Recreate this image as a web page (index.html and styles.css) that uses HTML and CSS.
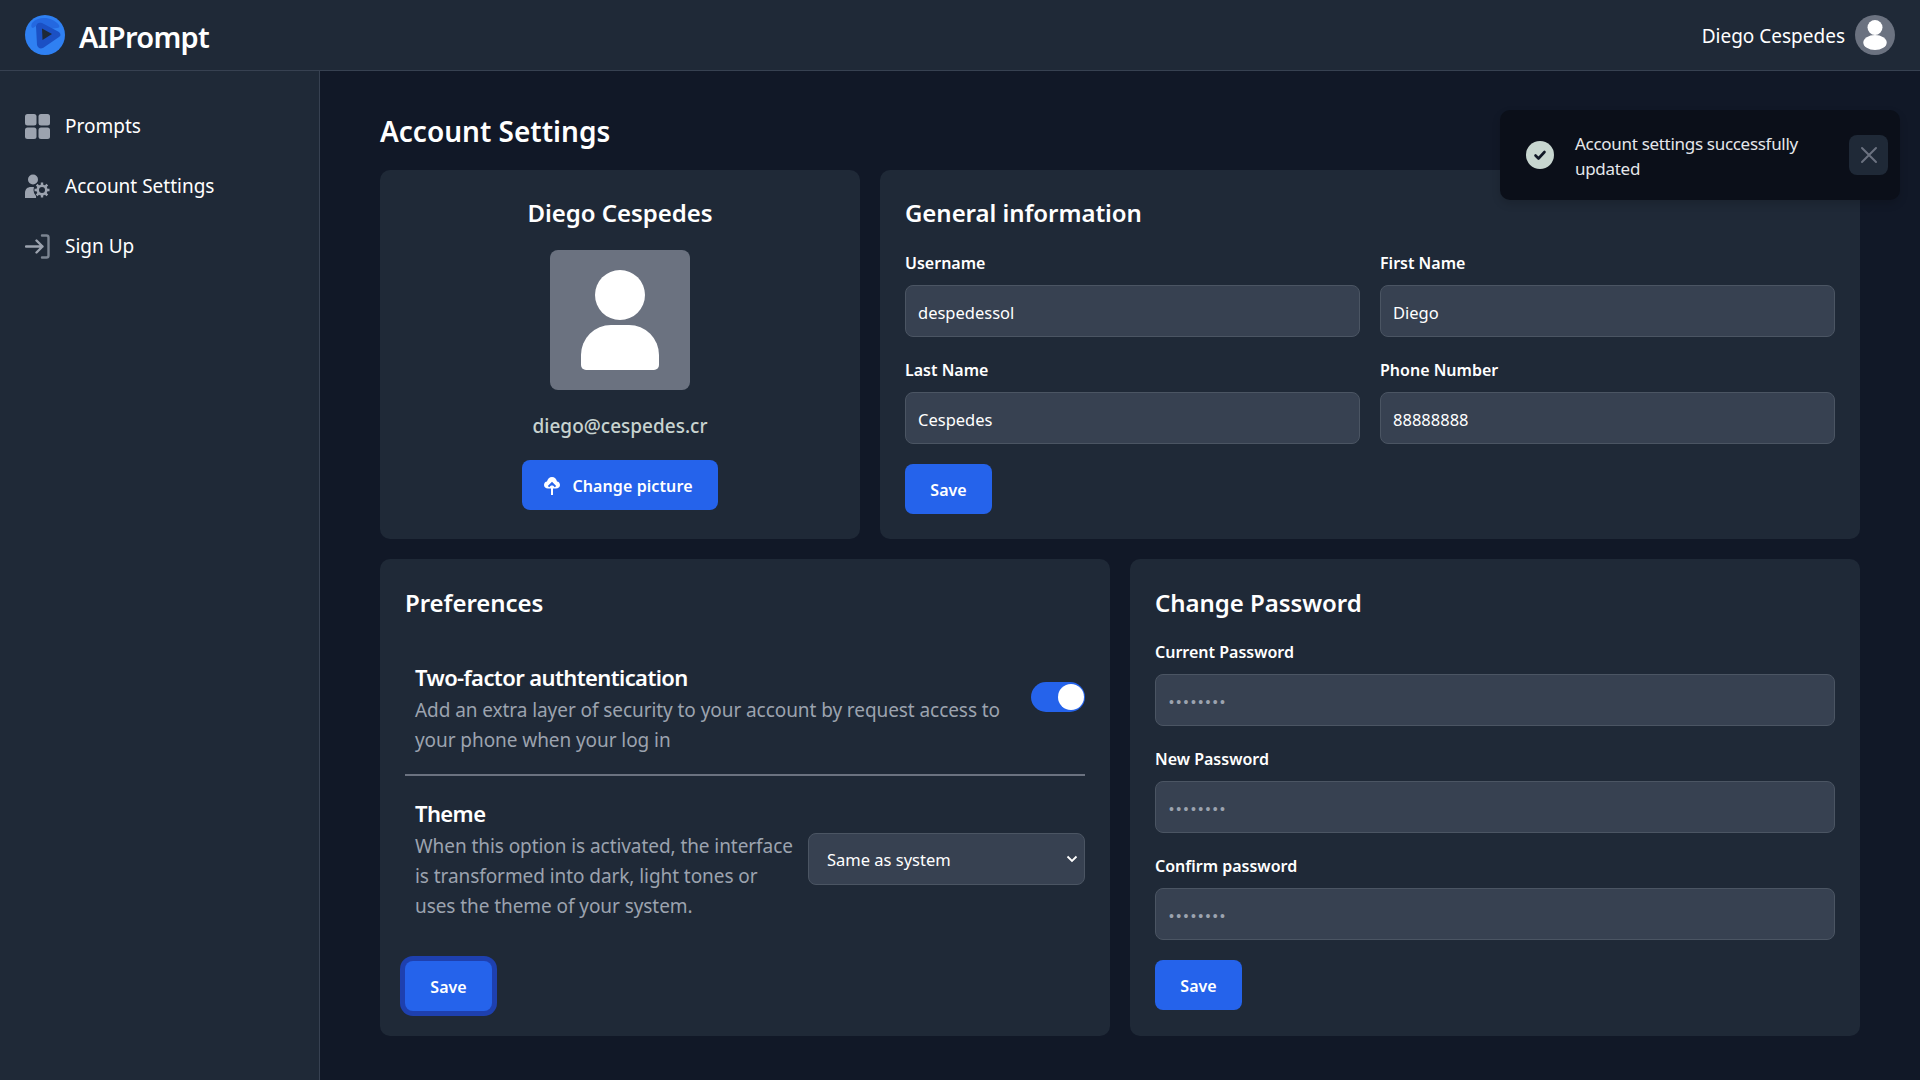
FILE: index.html
```html
<!DOCTYPE html>
<html lang="en">
<head>
<meta charset="utf-8">
<title>AIPrompt - Account Settings</title>
<link rel="stylesheet" href="styles.css">
</head>
<body>
<header class="topbar">
  <div class="brand">
    <svg class="logo" viewBox="0 0 40 40"><circle cx="20" cy="20" r="20" fill="#2f80f2"/><path d="M7 8C13 1 27 1 34 10c1 2 0 3-2 3l-8 1c-5-5-9-6-13-3l-3 2c-2 0-2-3-1-5z" fill="#2468e0"/><path d="M11 11c1-3 3-4 6-3l17 9c2 2 2 4 0 5L18 33c-3 1-5 0-6-3z" fill="#1b50c4"/><path d="M17 13.500l10 5.500-9.500 6z" fill="#1f2937"/></svg>
    <span class="brand-name">AIPrompt</span>
  </div>
  <div class="user">
    <span class="user-name">Diego Cespedes</span>
    <span class="user-avatar"><svg viewBox="0 0 40 40"><circle cx="20" cy="12.500" r="7.500" fill="#fff"/><ellipse cx="20" cy="27.500" rx="11.700" ry="7.500" fill="#fff"/></svg></span>
  </div>
</header>
<div class="shell">
  <nav class="sidebar">
    <a class="nav-item"><svg class="nav-icon" viewBox="0 0 25 25"><rect width="11.500" height="11.500" rx="2.500" fill="#9ca3af"/><rect x="13.500" width="11.500" height="11.500" rx="2.500" fill="#9ca3af"/><rect y="13.500" width="11.500" height="11.500" rx="2.500" fill="#9ca3af"/><rect x="13.500" y="13.500" width="11.500" height="11.500" rx="2.500" fill="#9ca3af"/></svg>Prompts</a>
    <a class="nav-item"><svg class="nav-icon" viewBox="0 0 25 25"><circle cx="8" cy="5.500" r="5" fill="#9ca3af"/><path d="M0 24v-5c0-4 2.500-6 6-6h5.500L11 24z" fill="#9ca3af"/><circle cx="17" cy="16" r="8.500" fill="#1f2937"/><circle cx="17" cy="16" r="4.300" fill="none" stroke="#9ca3af" stroke-width="2.600"/><path d="M17 8.500v3M17 20.500v3M9.500 16h3M21.500 16h3M11.700 10.700l2.100 2.100M20.200 19.200l2.100 2.100M22.300 10.700l-2.100 2.100M13.800 19.200l-2.100 2.100" stroke="#9ca3af" stroke-width="2.400"/></svg>Account Settings</a>
    <a class="nav-item"><svg class="nav-icon" viewBox="0 0 25 25" fill="none" stroke="#9ca3af" stroke-width="2.400" stroke-linecap="round" stroke-linejoin="round"><path d="M1 12.500h16.500M11.500 6.500l6 6-6 6"/><path d="M17 1.500h4.500a2 2 0 0 1 2 2v18a2 2 0 0 1-2 2H17" stroke="#7b8491"/></svg>Sign Up</a>
  </nav>
  <main class="content">
    <h1 class="page-title">Account Settings</h1>
    <div class="row row-top">
      <section class="card profile">
        <h2 class="card-title">Diego Cespedes</h2>
        <div class="photo"><svg viewBox="0 0 140 140"><circle cx="70" cy="45" r="25" fill="#fff"/><path d="M31 105a30 30 0 0 1 30-30h18a30 30 0 0 1 30 30v10a5 5 0 0 1-5 5H36a5 5 0 0 1-5-5z" fill="#fff"/></svg></div>
        <p class="email">diego@cespedes.cr</p>
        <button class="btn btn-icon"><svg class="upload" viewBox="0 0 16 18"><path d="M7 11.500H4C1.800 11.500 0 10 0 8c0-1.800 1.300-3.200 3-3.400C3.500 2 5.500 0 8 0s4.500 2 5 4.600c1.700.2 3 1.600 3 3.400 0 2-1.800 3.500-4 3.500H9V8.500l1.800 1.800 1.400-1.400L8 4.800 3.800 8.900l1.400 1.400L7 8.500z" fill="#fff"/><rect x="7" y="8.500" width="2" height="9.500" fill="#fff"/></svg>Change picture</button>
      </section>
      <section class="card general">
        <h2 class="card-title">General information</h2>
        <div class="field-grid">
          <div class="field"><label class="label">Username</label><input class="input" value="despedessol"></div>
          <div class="field"><label class="label">First Name</label><input class="input" value="Diego"></div>
          <div class="field"><label class="label">Last Name</label><input class="input" value="Cespedes"></div>
          <div class="field"><label class="label">Phone Number</label><input class="input" value="88888888"></div>
        </div>
        <button class="btn">Save</button>
      </section>
    </div>
    <div class="row row-bottom">
      <section class="card prefs">
        <h2 class="card-title">Preferences</h2>
        <div class="pref pref-2fa">
          <div class="pref-text">
            <h3 class="pref-title">Two-factor authtentication</h3>
            <p class="pref-desc">Add an extra layer of security to your account by request access to your phone when your log in</p>
          </div>
          <span class="toggle"><span class="knob"></span></span>
        </div>
        <div class="pref pref-theme">
          <div class="pref-text">
            <h3 class="pref-title">Theme</h3>
            <p class="pref-desc">When this option is activated, the interface is transformed into dark, light tones or uses the theme of your system.</p>
          </div>
          <select class="select"><option>Same as system</option></select>
        </div>
        <button class="btn btn-focus">Save</button>
      </section>
      <section class="card password">
        <h2 class="card-title">Change Password</h2>
        <div class="field-stack">
          <div class="field"><label class="label">Current Password</label><input class="input" type="password" value="12345678"></div>
          <div class="field"><label class="label">New Password</label><input class="input" type="password" value="12345678"></div>
          <div class="field"><label class="label">Confirm password</label><input class="input" type="password" value="12345678"></div>
        </div>
        <button class="btn">Save</button>
      </section>
    </div>
  </main>
</div>
<div class="toast">
  <span class="toast-check"><svg viewBox="0 0 28 28" fill="none" stroke="#111827" stroke-width="2.600" stroke-linecap="round" stroke-linejoin="round"><path d="M9.500 14.500l3 3 6-6.500"/></svg></span>
  <span class="toast-text">Account settings successfully updated</span>
  <span class="toast-close"><svg viewBox="0 0 39 39" fill="none" stroke="#6b7280" stroke-width="2" stroke-linecap="round"><path d="M13 13l14 14M27 13L13 27"/></svg></span>
</div>
</body>
</html>
```
FILE: styles.css
```css
* { box-sizing: border-box; }
html, body { margin: 0; height: 100%; }
body {
  background: #111827;
  color: #fff;
  font-family: "Noto Sans", "Open Sans", sans-serif;
  font-size: 16px;
  overflow: hidden;
}
.topbar {
  height: 71px;
  background: #1f2937;
  border-bottom: 1px solid #374151;
  display: flex;
  align-items: center;
  justify-content: space-between;
  padding: 0 25px;
}
.brand { display: flex; align-items: center; gap: 14px; }
.logo { width: 40px; height: 40px; display: block; }
.brand-name { font-size: 29px; font-weight: 600; letter-spacing: -.7px; padding-top: 2px; }
.user { display: flex; align-items: center; gap: 10px; }
.user-name { font-size: 19px; padding-top: 1px; }
.user-avatar { width: 40px; height: 40px; border-radius: 50%; background: #6b7280; display: block; overflow: hidden; }
.user-avatar svg { display: block; }
.shell { display: flex; height: 1009px; }
.sidebar {
  width: 320px;
  background: #1f2937;
  border-right: 1px solid #374151;
  padding: 35px 25px 0;
  display: flex;
  flex-direction: column;
  gap: 20px;
}
.nav-item { height: 40px; display: flex; align-items: center; gap: 15px; font-size: 19px; color: #fff; }
.nav-icon { width: 25px; height: 25px; flex: none; }
.content { flex: 1; padding: 40px 60px 0; }
.page-title { margin: 0 0 19px; font-size: 28px; line-height: 40px; font-weight: 600; }
.row { display: grid; gap: 20px; margin-bottom: 20px; }
.row-top { grid-template-columns: 480px 980px; height: 369px; }
.row-bottom { grid-template-columns: 730px 730px; height: 477px; }
.card { background: #1f2937; border-radius: 10px; padding: 25px; }
.row-bottom .card { padding-top: 26px; }
.card-title { margin: 0 0 19px; font-size: 24px; line-height: 36px; font-weight: 600; letter-spacing: -.05px; }
.general .card-title { margin-bottom: 20px; }
.profile { display: flex; flex-direction: column; align-items: center; }
.photo { width: 140px; height: 140px; border-radius: 8px; background: #6b7280; overflow: hidden; }
.photo svg { display: block; }
.email { margin: 23px 0 20px; font-size: 19px; line-height: 27px; font-weight: 500; color: #c8d3d0; }
.btn {
  height: 50px;
  width: 87px;
  border: 0;
  border-radius: 8px;
  background: #2563eb;
  color: #fff;
  font: 600 16px "Noto Sans", sans-serif;
  padding: 2px 0 0;
  display: flex;
  align-items: center;
  justify-content: center;
}
.btn-icon { width: 196px; gap: 12px; letter-spacing: .1px; padding-right: 3px; }
.upload { width: 16px; height: 18px; }
.field-grid { display: grid; grid-template-columns: 455px 455px; column-gap: 20px; row-gap: 21px; width: 930px; margin-bottom: 20px; }
.field-stack { display: flex; flex-direction: column; gap: 21px; margin-bottom: 20px; }
.label { display: block; height: 24px; margin-bottom: 10px; font-size: 16px; line-height: 24px; font-weight: 600; }
.input {
  display: block;
  width: 100%;
  height: 52px;
  padding: 2px 12px 0;
  background: #374151;
  border: 1px solid #4b5563;
  border-radius: 8px;
  color: #fff;
  font: 400 16.5px "Noto Sans", sans-serif;
  outline: 0;
}
.input[type="password"] { color: #9ca3af; font-family: "Liberation Sans", sans-serif; font-size: 14px; letter-spacing: 2.4px; padding: 3px 12px 0 13px; }
.pref { display: flex; justify-content: space-between; }
.pref-2fa { padding: 22px 0 19px 10px; border-bottom: 2px solid #6b7280; margin-bottom: 22px; }
.pref-theme { padding-left: 10px; margin-bottom: 40px; }
.pref-text { min-width: 0; }
.pref-2fa .pref-text { width: 590px; }
.pref-theme .pref-text { width: 385px; }
.pref-title { margin: 0 0 3px; font-size: 22px; line-height: 30px; font-weight: 600; letter-spacing: -.6px; }
.pref-desc { margin: 0; font-size: 19px; line-height: 30px; color: #9ca3af; letter-spacing: -.07px; }
.toggle { width: 54px; height: 30px; margin-top: 20px; border-radius: 15px; background: #2563eb; padding: 2px 1px; display: flex; justify-content: flex-end; }
.knob { width: 26px; height: 26px; border-radius: 50%; background: #fff; }
.select {
  appearance: none;
  width: 277px;
  height: 52px;
  margin-top: 35px;
  padding: 0 13px 0 18px;
  background: #374151 url("data:image/svg+xml,%3Csvg xmlns='http://www.w3.org/2000/svg' width='12' height='8' fill='none' stroke='white' stroke-width='1.800'%3E%3Cpath d='M1.500 1.500 6 6l4.500-4.500'/%3E%3C/svg%3E") no-repeat right 6px center;
  border: 1px solid #4b5563;
  border-radius: 8px;
  color: #fff;
  font: 400 16.5px "Noto Sans", sans-serif;
}
.btn-focus { box-shadow: 0 0 0 5px #1e40af; }
.toast {
  position: absolute;
  left: 1500px;
  top: 110px;
  width: 400px;
  height: 90px;
  background: #0b0f19;
  border-radius: 10px;
  box-shadow: 0 4px 8px rgba(0,0,0,.15);
  display: flex;
  align-items: center;
  padding: 0 12px 0 26px;
}
.toast-check { width: 28px; height: 28px; border-radius: 50%; background: #c8d6d0; flex: none; margin-right: 21px; }
.toast-check svg, .toast-close svg { display: block; }
.toast-text { flex: 1; font-size: 17px; line-height: 25px; color: #e5e7eb; letter-spacing: -.3px; padding: 1px 20px 0 0; }
.toast-close { width: 39px; height: 40px; border-radius: 8px; background: #1f2937; flex: none; }
```
